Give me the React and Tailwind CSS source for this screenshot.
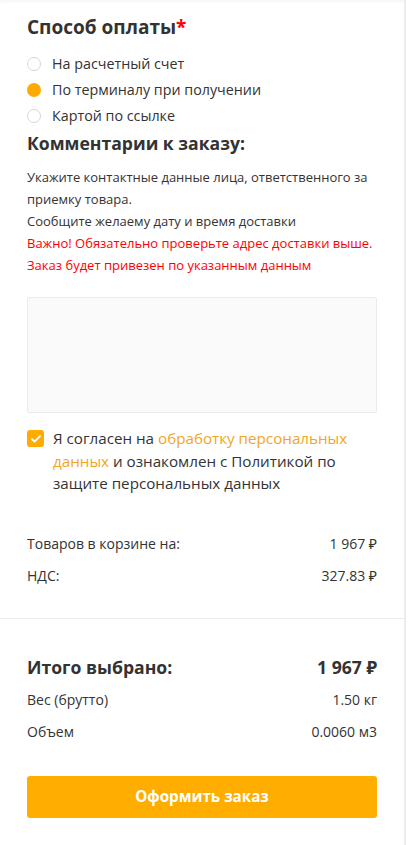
import React, { useState } from 'react';

const font = { fontFamily: '"Open Sans", "Noto Sans", sans-serif' };

const paymentOptions = [
  { id: 'account', label: 'На расчетный счет' },
  { id: 'terminal', label: 'По терминалу при получении' },
  { id: 'link', label: 'Картой по ссылке' }
];

export default function App() {
  const [payment, setPayment] = useState('terminal');
  const [agree, setAgree] = useState(true);
  const [comment, setComment] = useState('');

  return (
    <div className="min-h-[845px] bg-white flex" style={font}>
      <div className="w-[406px] border-r-2 border-[#ececec] bg-white shadow-[inset_0_4px_4px_-3px_rgba(0,0,0,0.06)]">
        {/* Payment */}
        <div className="px-[27px] pt-[14px]">
          <h2 className="text-[19px] leading-[26px] font-bold text-[#333]">
            Способ оплаты<span className="text-[#ff0000]">*</span>
          </h2>
          <div className="mt-[11px] flex flex-col">
            {paymentOptions.map(o => (
              <label
                key={o.id}
                className="flex items-center h-[26px] cursor-pointer"
                onClick={() => setPayment(o.id)}
              >
                <span
                  className={`w-[14px] h-[14px] rounded-full shrink-0 ${
                    payment === o.id ? 'bg-[#ffab00]' : 'border border-[#d6d6d6] bg-white'
                  }`}
                />
                <span className="ml-[11px] text-[14.3px] text-[#333]">{o.label}</span>
              </label>
            ))}
          </div>
        </div>

        {/* Comments */}
        <div className="px-[27px] mt-[1px]">
          <h2 className="text-[17.6px] leading-[26px] font-bold text-[#333]">Комментарии к заказу:</h2>
          <div className="mt-[10px] text-[13px] leading-[22px] text-[#333]">
            <p>Укажите контактные данные лица, ответственного за приемку товара.</p>
            <p>Сообщите желаему дату и время доставки</p>
            <p className="text-[#ff0000]">Важно! Обязательно проверьте адрес доставки выше.</p>
            <p className="text-[#ff0000]">Заказ будет привезен по указанным данным</p>
          </div>
          <textarea
            value={comment}
            onChange={e => setComment(e.target.value)}
            className="mt-[21px] block w-full h-[116px] bg-[#fafafa] border border-[#ebebeb] rounded-[2px] resize-none outline-none p-2 text-[13px]"
          />

          <label className="mt-[14px] flex items-start cursor-pointer" onClick={() => setAgree(!agree)}>
            <span
              className={`mt-[3px] w-[17px] h-[17px] rounded-[3px] shrink-0 flex items-center justify-center ${
                agree ? 'bg-[#ffab00]' : 'border border-[#d6d6d6]'
              }`}
            >
              {agree && (
                <svg width="10" height="8" viewBox="0 0 10 8" fill="none">
                  <path d="M1 4.2L3.6 6.6L9 1.2" stroke="white" strokeWidth="1.8" strokeLinecap="round" strokeLinejoin="round" />
                </svg>
              )}
            </span>
            <span className="ml-[9px] text-[15.2px] leading-[22.5px] text-[#333]">
              Я согласен на <span className="text-[#f2a51f]">обработку персональных данных</span> и ознакомлен с Политикой по защите персональных данных
            </span>
          </label>
        </div>

        {/* Cart summary */}
        <div className="px-[27px] mt-[33px] text-[14px] text-[#333]">
          <div className="flex justify-between h-[32px] items-center">
            <span>Товаров в корзине на:</span>
            <span>1 967 ₽</span>
          </div>
          <div className="flex justify-between h-[32px] items-center">
            <span>НДС:</span>
            <span>327.83 ₽</span>
          </div>
        </div>

        <div className="mt-[26px] border-t border-[#ececec]" />

        {/* Total */}
        <div className="px-[27px] pt-[35px] text-[#333]">
          <div className="flex justify-between items-center h-[28px]">
            <span className="text-[17.6px] font-bold">Итого выбрано:</span>
            <span className="text-[17.6px] font-bold">1 967 ₽</span>
          </div>
          <div className="mt-[2px] text-[14px]">
            <div className="flex justify-between items-center h-[32px]">
              <span>Вес (брутто)</span>
              <span>1.50 кг</span>
            </div>
            <div className="flex justify-between items-center h-[32px]">
              <span>Объем</span>
              <span>0.0060 м3</span>
            </div>
          </div>
          <button className="mt-[28px] w-full h-[42px] rounded-[3px] bg-[#ffae00] text-white text-[15.2px] font-bold hover:bg-[#f5a300] transition-colors">
            Оформить заказ
          </button>
        </div>
      </div>
    </div>
  );
}
